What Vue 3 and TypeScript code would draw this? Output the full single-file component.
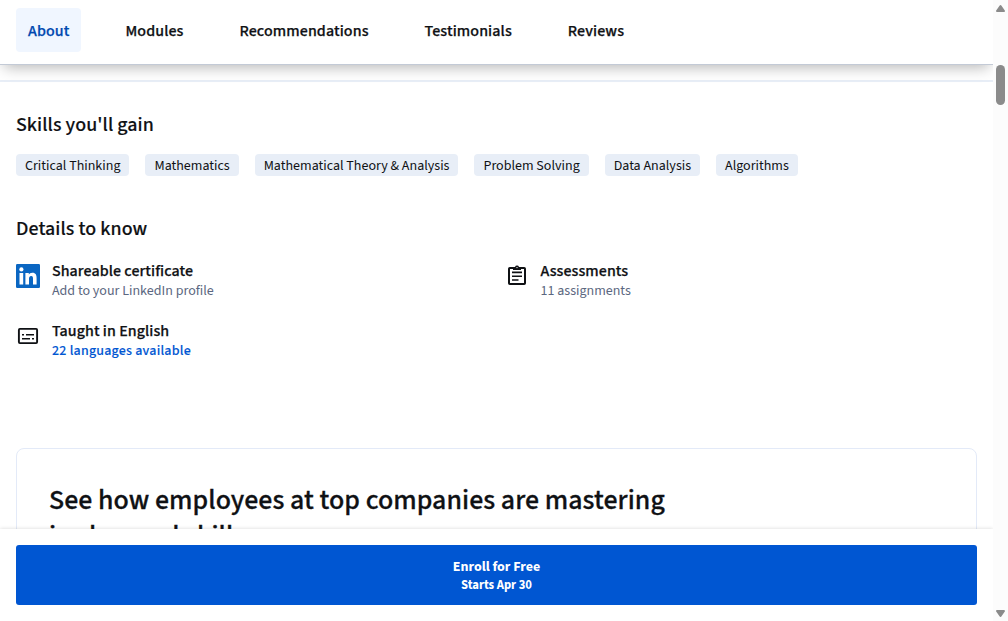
<script setup lang="ts">
interface Tab { label: string; active?: boolean }

const tabs: Tab[] = [
  { label: 'About', active: true },
  { label: 'Modules' },
  { label: 'Recommendations' },
  { label: 'Testimonials' },
  { label: 'Reviews' },
]

const skills: string[] = [
  'Critical Thinking',
  'Mathematics',
  'Mathematical Theory & Analysis',
  'Problem Solving',
  'Data Analysis',
  'Algorithms',
]
</script>

<template>
  <div class="window">
    <div class="viewport">
      <nav class="tabs">
        <a v-for="tab in tabs" :key="tab.label" class="tab" :class="{ active: tab.active }">{{ tab.label }}</a>
      </nav>

      <main class="content">
        <section class="skills">
          <h2>Skills you'll gain</h2>
          <ul class="chips">
            <li v-for="skill in skills" :key="skill" class="chip">{{ skill }}</li>
          </ul>
        </section>

        <section class="details">
          <h2>Details to know</h2>
          <div class="grid">
            <div class="item">
              <svg class="icon" width="24" height="24" viewBox="0 0 24 24">
                <rect width="24" height="24" rx="1.2" fill="#0a66c2" />
                <circle cx="5.4" cy="5.4" r="2.1" fill="#fff" />
                <path fill="#fff" d="M3.500 9h3.700v11.400H3.500zM9.400 9h3.400v1.600c.5-.9 1.700-1.900 3.500-1.900 3.600 0 4.300 2.400 4.300 5.500v6.200H17v-5.500c0-1.300 0-3-1.800-3s-2.200 1.400-2.200 2.900v5.600H9.400z" />
              </svg>
              <div>
                <h3>Shareable certificate</h3>
                <p>Add to your LinkedIn profile</p>
              </div>
            </div>
            <div class="item">
              <svg class="icon" width="24" height="24" viewBox="0 0 24 24">
                <rect x="4" y="4" width="16" height="16" rx=".8" fill="none" stroke="#0f1114" stroke-width="2" />
                <path fill="#0f1114" d="M8 3h2a2.100 2.100 0 0 1 4 0h2v3H8z" />
                <circle cx="12" cy="3.600" r=".7" fill="#fff" />
                <path fill="none" stroke="#0f1114" stroke-width="1.600" d="M7 8.400h10M7 12.200h10M7 16h6.500" />
              </svg>
              <div>
                <h3>Assessments</h3>
                <p>11 assignments</p>
              </div>
            </div>
            <div class="item">
              <svg class="icon" width="24" height="24" viewBox="0 0 24 24">
                <rect x="2.900" y="4.900" width="18.200" height="14.200" rx="1" fill="none" stroke="#0f1114" stroke-width="1.900" />
                <path fill="none" stroke="#0f1114" stroke-width="1.600" d="M6 10.700h2M10 10.700h8M6 14.700h8M16 14.700h2" />
              </svg>
              <div>
                <h3>Taught in English</h3>
                <p class="link">22 languages available</p>
              </div>
            </div>
          </div>
        </section>

        <section class="card">
          <h1>See how employees at top companies are mastering<br>in-demand skills</h1>
        </section>
      </main>

      <footer class="enroll">
        <button type="button">
          <span class="enroll-title">Enroll for Free</span>
          <span class="enroll-date">Starts Apr 30</span>
        </button>
      </footer>
    </div>

    <aside class="scrollbar">
      <svg width="15" height="621" viewBox="0 0 15 621">
        <path d="M7.500 6L11 11H4z" fill="#8b8b8b" stroke="#8b8b8b" stroke-width="2" stroke-linejoin="round" />
        <rect x="3" y="65" width="9" height="40" rx="4.500" fill="#8b8b8b" />
        <path d="M7.500 616L11 611H4z" fill="#8b8b8b" stroke="#8b8b8b" stroke-width="2" stroke-linejoin="round" />
      </svg>
    </aside>
  </div>
</template>

<style>
html, body { margin: 0; overflow: hidden; background: #fff; }
</style>

<style scoped>
* { box-sizing: border-box; margin: 0; padding: 0; }
.window {
  display: flex;
  width: 1008px;
  height: 621px;
  overflow: hidden;
  background: #fff;
  color: #0f1114;
  font-family: "Source Sans 3", "Source Sans Pro", "Noto Sans CJK SC", sans-serif;
}
.viewport { display: flex; flex-direction: column; width: 993px; height: 621px; overflow: hidden; }
.tabs {
  z-index: 1;
  display: flex;
  flex: none;
  gap: 32px;
  height: 65px;
  padding: 8px 16px 0;
  background: #fff;
  border-bottom: 1px solid #c3cad6;
  box-shadow: 0 6px 14px -4px rgba(0, 0, 0, .3);
}
.tab { height: 44px; padding: 0 12px; border-radius: 4px; font-size: 16px; font-weight: 500; letter-spacing: .11px; line-height: 46px; white-space: nowrap; -webkit-text-stroke: .25px currentColor; }
.tab.active { background: #f0f6ff; color: #0048b0; }
.content { flex: 1; min-height: 0; margin-top: 15px; border-top: 2px solid #e8eef7; padding: 31px 16px 0; overflow: hidden; }
h2 { font-size: 20px; font-weight: 500; letter-spacing: .08px; line-height: 24px; -webkit-text-stroke: .15px currentColor; }
.chips { display: flex; gap: 16px; margin-top: 17px; list-style: none; }
.chip { height: 22px; padding: 0 9px; border-radius: 4px; background: #e8eef7; font-size: 14px; line-height: 24px; white-space: nowrap; }
.details { margin-top: 41px; }
.grid { display: grid; grid-template-columns: 488.500px 1fr; row-gap: 20px; margin-top: 20px; }
.item { display: flex; gap: 12px; height: 40px; }
.icon { flex: none; margin-top: 3px; }
h3 { font-size: 16px; font-weight: 500; letter-spacing: .08px; line-height: 20px; -webkit-text-stroke: .25px currentColor; }
p { color: #5b6780; font-size: 14px; line-height: 21px; }
.link { color: #0056d2; font-weight: 500; letter-spacing: .23px; -webkit-text-stroke: .12px currentColor; }
.card { height: 300px; margin-top: 87px; padding: 33px 32px 0; border: 1px solid #e3eaf8; border-radius: 8px; }
h1 { font-size: 28px; font-weight: 500; letter-spacing: .06px; line-height: 36px; white-space: nowrap; -webkit-text-stroke: .3px currentColor; }
.enroll { z-index: 1; flex: none; height: 92px; padding: 16px; background: #fff; box-shadow: 0 0 4px rgba(0, 0, 0, .16); }
button { display: flex; flex-direction: column; align-items: center; justify-content: center; width: 100%; height: 60px; padding-top: 2px; border: 0; border-radius: 3px; background: #0056d2; color: #fff; font-family: inherit; font-weight: 700; }
.enroll-title { font-size: 14px; line-height: 18px; }
.enroll-date { font-size: 12.600px; line-height: 18px; }
.scrollbar { z-index: 2; width: 15px; background: #fcfcfc; }
.scrollbar svg { display: block; }
</style>
